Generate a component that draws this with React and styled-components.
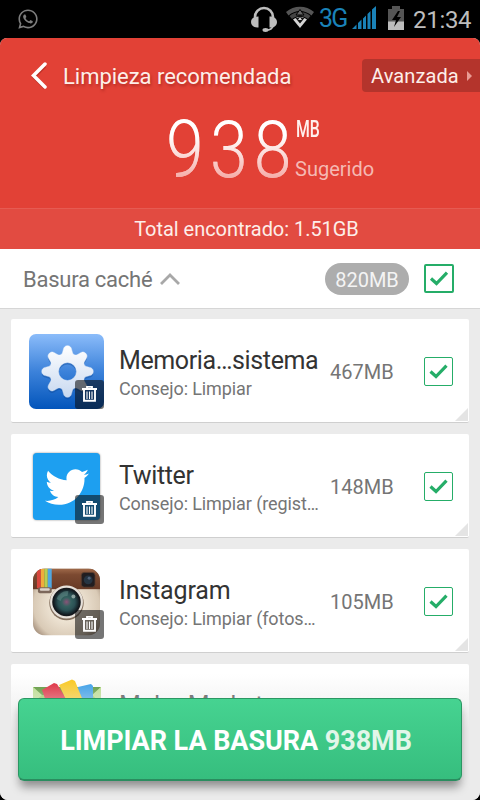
import React from 'react';
import styled, { createGlobalStyle } from 'styled-components';
import { FaTwitter, FaWhatsapp } from 'react-icons/fa';

const palette = {
  red: '#e24136',
  redLight: '#e24b41',
  green: '#25ad68',
  bg: '#ebebeb',
  blue: '#1a82b8',
};

const GlobalStyle = createGlobalStyle`
  * {
    box-sizing: border-box;
  }
  body {
    margin: 0;
    background: #000;
    font-family: Roboto, 'Liberation Sans', sans-serif;
  }
  svg {
    display: block;
    flex-shrink: 0;
  }
`;

const Screen = styled.div`
  width: 480px;
  height: 800px;
  overflow: hidden;
  background: #000;
`;

const StatusBar = styled.div`
  display: flex;
  align-items: flex-start;
  height: 38px;
  padding: 6px 0 0 17px;
  color: #7d7d7d;
`;

const Notification = styled.div`
  margin-top: 2px;
`;

const StatusIcons = styled.div`
  display: flex;
  align-items: flex-start;
  margin-left: auto;
`;

const Network = styled.span`
  margin-left: 4px;
  width: 33px;
  font-size: 25px;
  line-height: 25px;
  letter-spacing: -1.8px;
  color: ${palette.blue};
`;

const Clock = styled.span`
  width: 67px;
  margin-left: 9px;
  font-size: 24px;
  line-height: 28px;
  letter-spacing: -0.3px;
  color: #bdbdbd;
`;

const Page = styled.div`
  position: relative;
  height: 762px;
  overflow: hidden;
  border-radius: 7px 7px 8px 8px;
  background: ${palette.bg};
`;

const Header = styled.header`
  height: 211px;
  background: ${palette.red};
  color: #fdeee9;
`;

const TitleBar = styled.div`
  display: flex;
  align-items: center;
  height: 75px;
  padding-left: 30px;
`;

const PageTitle = styled.h1`
  margin: 3px 0 0 15px;
  font-weight: normal;
  font-size: 22px;
  line-height: 30px;
  letter-spacing: -0.03px;
  text-shadow: 1px 2px 3px rgba(90, 0, 0, 0.35);
`;

const Advanced = styled.button`
  display: flex;
  align-items: center;
  justify-content: space-between;
  width: 118px;
  height: 33px;
  margin-left: auto;
  padding: 0 8px 0 9px;
  border: 0;
  border-radius: 4px 0 0 4px;
  background: #b4342c;
  color: #fdeee9;
  font-family: inherit;
  font-size: 20px;
  letter-spacing: 0.1px;
`;

const Summary = styled.div`
  display: flex;
  height: 95px;
  padding: 0 0 0 166px;
`;

const Amount = styled.div`
  width: 129px;
  margin-top: -10px;
  height: 94px;
  font-size: 80px;
  font-weight: 300;
  line-height: 94px;
  letter-spacing: 7.3px;
  white-space: nowrap;
  transform: scaleX(0.85);
  transform-origin: left;
  color: transparent;
  filter: drop-shadow(0.8px 0.3px 0 rgba(252, 215, 210, 0.75));

  span {
    display: inline-block;
    width: 150px;
    height: 94px;
    overflow: hidden;
    background: linear-gradient(#fff 35%, #f5a9a4 82%);
    background-clip: text;
  }
`;

const AmountNotes = styled.div`
  display: flex;
  flex-direction: column;
`;

const Unit = styled.span`
  height: 38px;
  margin-left: 1px;
  font-size: 24px;
  font-weight: 500;
  line-height: 32px;
  transform: scaleX(0.66);
  transform-origin: left;
  color: #fff0ee;
`;

const Suggested = styled.span`
  margin-top: 4px;
  font-size: 20px;
  line-height: 28px;
  color: #f5b9b3;
`;

const Total = styled.div`
  height: 41px;
  border-top: 1px solid #e65b52;
  background: ${palette.redLight};
  font-size: 20px;
  line-height: 41px;
  letter-spacing: -0.04px;
  text-align: center;
  padding-left: 13px;
`;

const Section = styled.div`
  display: flex;
  align-items: center;
  height: 60px;
  padding: 0 26px 0 23px;
  border-bottom: 1px solid #d6d6d6;
  background: #fff;
`;

const SectionName = styled.span`
  margin: 2px 8px 0 0;
  font-size: 22px;
  letter-spacing: -0.25px;
  color: #757575;
`;

const Pill = styled.span`
  width: 84px;
  height: 32px;
  margin: 0 15px 0 auto;
  border-radius: 16px;
  background: #adadad;
  color: #f4f4f4;
  font-size: 20px;
  line-height: 34px;
  text-align: center;
`;

const CheckBox = styled.span`
  display: flex;
  align-items: center;
  justify-content: center;
  flex-shrink: 0;
  width: ${({ $bold }) => ($bold ? 30 : 29)}px;
  height: 29px;
  border: ${({ $bold }) => ($bold ? 2 : 1.6)}px solid ${palette.green};
  border-radius: 2px;
  background: #fff;
`;

const List = styled.div`
  display: flex;
  flex-direction: column;
  gap: 11px;
  padding: 10px 11px;
`;

const Card = styled.div`
  position: relative;
  display: flex;
  align-items: center;
  height: 104px;
  padding: 2px 16px 0 18px;
  border-radius: 2px;
  border-bottom: 1px solid #cfcfcf;
  background: #fff;

  &::after {
    content: '';
    position: absolute;
    right: 1px;
    bottom: 1px;
    width: 13px;
    height: 13px;
    background: #e4e4e4;
    clip-path: polygon(100% 0, 100% 100%, 0 100%);
  }
`;

const IconBox = styled.div`
  position: relative;
  display: flex;
  align-items: center;
  justify-content: center;
  width: 75px;
  height: 75px;
  margin-top: -1px;
`;

const TwitterTile = styled.div`
  display: flex;
  align-items: center;
  justify-content: center;
  width: 67px;
  height: 67px;
  margin-top: 1px;
  border-radius: 4px;
  background: #1d9ff0;
  color: #fff;
  box-shadow: 0 0 2px rgba(0, 0, 0, 0.5);
`;

const Badge = styled.div`
  position: absolute;
  right: 0;
  bottom: 0;
  display: flex;
  align-items: center;
  justify-content: center;
  width: 29px;
  height: 29px;
  border-radius: 3px;
  background: rgba(12, 12, 12, 0.57);
`;

const Info = styled.div`
  width: 211px;
  margin: 4px 0 0 15px;
  white-space: nowrap;
`;

const Name = styled.div`
  font-size: 25px;
  line-height: 31px;
  letter-spacing: ${({ $spacing = -0.38 }) => $spacing}px;
  color: #333;
`;

const Tip = styled.div`
  min-height: 26px;
  font-size: 18px;
  line-height: 26px;
  letter-spacing: -0.1px;
  color: #757575;
`;

const Size = styled.span`
  flex: 1;
  font-size: 20px;
  color: #757575;
`;

const Footer = styled.div`
  position: absolute;
  left: 0;
  right: 0;
  bottom: 0;
  height: 126px;
  padding: 24px 18px 0;
  background: linear-gradient(rgba(235, 235, 235, 0), ${palette.bg} 45%);
`;

const CleanButton = styled.button`
  display: block;
  width: 444px;
  height: 83px;
  padding: 3px 8px 0 0;
  border: 1px solid #2b9763;
  border-bottom: 2px solid #2a8d5f;
  border-radius: 6px;
  background: linear-gradient(#46d391, #36be7e);
  box-shadow: 0 8px 10px -2px rgba(0, 0, 0, 0.4);
  color: #fff;
  font-family: inherit;
  font-size: 27px;
  font-weight: 700;
  letter-spacing: -0.05px;

  span {
    color: #e2f6e9;
  }
`;

const HeadsetIcon = () => (
  <svg width="26" height="26" viewBox="0 0 26 26" fill="none">
    <path d="M4 14V11a9 9 0 0 1 18 0v3" stroke="#bdbdbd" strokeWidth="2.6" />
    <path d="M7.5 10.5v11C3 22 0 19.500 0 16s3-5.500 7.500-5.500zM18.500 10.500v11C23 22 26 19.500 26 16s-3-5.500-7.500-5.500z" fill="#bdbdbd" />
    <path d="M22 20c-1 3-3 4-6 4" stroke="#bdbdbd" strokeWidth="1.8" />
    <ellipse cx="14.500" cy="24" rx="3" ry="1.900" fill="#bdbdbd" />
  </svg>
);

const WifiIcon = () => (
  <svg width="30" height="23" viewBox="0 0 30 23" fill="none">
    <path d="M1 6C9-1 21-1 29 6l-2.500 3.500c-6.500-6-16.500-6-23 0z" fill="#555" />
    <path d="M4.500 10c6-5.500 15-5.500 21 0L23 13c-5-4-11-4-16 0z" fill="#444" />
    <path d="M8 13.500L15 22l7-8.500c-4-3.500-10-3.500-14 0z" fill="#d4d4d4" />
    <path d="M15 3.500l4 5.500h-8z" fill="#666" stroke="#000" strokeWidth="1" />
    <path d="M13.500 9h3v3h3L15 17.500 10.500 12h3z" fill="#111" />
    <path d="M15 11l2 3h-4z" fill="#d4d4d4" />
  </svg>
);

const SignalIcon = () => (
  <svg width="24" height="24" viewBox="0 0 24 24" fill={palette.blue}>
    <path d="M0 23l4.500-4.500V23zM6 17l3.500-3.500V23H6zM11 12.500l3-3V23h-3zM15.500 8l3-3v18h-3zM20 3.500L24 0v23h-4z" />
  </svg>
);

const BatteryIcon = () => (
  <svg width="16" height="24" viewBox="0 0 16 24">
    <path d="M4 0h8v3h4v13H0V3h4z" fill="#555" />
    <path d="M0 15.500h16V24H0z" fill="#bdbdbd" />
    <path d="M10 5L4 14h4l-2 7 7-10H9l3-6z" fill="#000" />
  </svg>
);

const Check = ({ size = 19 }) => (
  <svg width={size} height="15" viewBox="0 0 19 15" fill="none">
    <path d="M1.500 7.500L7 12.500 17.500 1.700" stroke={palette.green} strokeWidth="3.200" />
  </svg>
);

const TrashIcon = () => (
  <svg width="15" height="16" viewBox="0 0 15 16" fill="none" stroke="#fff">
    <path d="M5 2V.8h5V2M0 3h15" strokeWidth="1.800" />
    <path d="M2 4v10.800h11V4" strokeWidth="1.900" />
    <path d="M5 5.500v7.500M7.500 5.500v7.500M10 5.500v7.500" strokeWidth="1.100" />
  </svg>
);

// eight rounded teeth around the centre of a 75px tile
const gearPath = () => {
  const points = [];
  for (let i = 0; i < 240; i += 1) {
    const angle = (i / 240) * Math.PI * 2;
    const r = 21.9 + (3.8 * Math.tanh(1.3 * Math.cos(angle * 8))) / 0.86;
    points.push(`${(38.5 + r * Math.cos(angle)).toFixed(2)} ${(37.5 + r * Math.sin(angle)).toFixed(2)}`);
  }
  return `M${points.join('L')}Z M47.500 37.500a9 9 0 1 0-18 0a9 9 0 1 0 18 0Z`;
};

const SystemIcon = () => (
  <svg width="75" height="75" viewBox="0 0 75 75">
    <defs>
      <linearGradient id="sys" x2="0" y2="1">
        <stop stopColor="#8bbcfa" />
        <stop offset="0.5" stopColor="#3c82da" />
        <stop offset="1" stopColor="#0355bb" />
      </linearGradient>
      <linearGradient id="gear" x2="0" y2="1">
        <stop stopColor="#fff" />
        <stop offset="1" stopColor="#c7d8f0" />
      </linearGradient>
    </defs>
    <rect width="75" height="75" rx="7" fill="url(#sys)" />
    <path d={gearPath()} transform="translate(0 2)" fill="#063f8c" opacity="0.35" fillRule="evenodd" />
    <path d={gearPath()} fill="url(#gear)" stroke="url(#gear)" strokeLinejoin="round" strokeWidth="0.500" fillRule="evenodd" />
  </svg>
);

const TwitterIcon = () => (
  <TwitterTile>
    <FaTwitter size={44} />
  </TwitterTile>
);

const InstagramIcon = () => (
  <svg width="67" height="69" viewBox="0 -1 68 69">
    <defs>
      <clipPath id="camera">
        <rect width="68" height="68" rx="12" />
      </clipPath>
      <radialGradient id="body" cy="0.55" r="0.7">
        <stop offset="0.3" stopColor="#efe5d5" />
        <stop offset="0.7" stopColor="#d9cab6" />
        <stop offset="1" stopColor="#7d6350" />
      </radialGradient>
      <linearGradient id="leather" x2="0" y2="1">
        <stop stopColor="#a06a4a" />
        <stop offset="0.3" stopColor="#7c4a31" />
        <stop offset="1" stopColor="#683a26" />
      </linearGradient>
      <radialGradient id="lens">
        <stop stopColor="#8a5378" />
        <stop offset="0.35" stopColor="#35615f" />
        <stop offset="0.65" stopColor="#2b5054" />
        <stop offset="1" stopColor="#10171d" />
      </radialGradient>
    </defs>
    <g clipPath="url(#camera)">
      <rect width="68" height="68" fill="url(#body)" />
      <rect width="68" height="21" fill="url(#leather)" />
      <path d="M4 0h4v20H4z" fill="#d9473d" />
      <path d="M8 0h3.500v20H8z" fill="#efad3c" />
      <path d="M11.500 0H15v20h-3.500z" fill="#b9cf50" />
      <path d="M15 0h4v20h-4z" fill="#51a8e0" />
      <rect x="5" y="19" width="14" height="6" rx="2" fill="#7c675a" />
      <rect x="7" y="20" width="10" height="2.500" rx="1" fill="#ddd3ca" />
    </g>
    <rect x="49" y="4" width="14" height="15" rx="3" fill="#211d20" stroke="#60402f" strokeWidth="0.800" />
    <circle cx="56" cy="11.500" r="4.500" fill="#263543" />
    <circle cx="57" cy="10" r="1.500" fill="#53637a" />
    <circle cx="34" cy="35" r="17.500" fill="#84705e" />
    <circle cx="34" cy="34" r="16.700" fill="#e7e1da" />
    <circle cx="34" cy="34" r="14.500" fill="#17191d" />
    <circle cx="34" cy="34" r="13.300" fill="url(#lens)" />
    <path d="M24 31a11 11 0 0 1 12-8l-1 5a7 7 0 0 0-7 5z" fill="#68938e" opacity="0.5" />
    <circle cx="41" cy="28.500" r="2" fill="#a4b8b4" opacity="0.8" />
  </svg>
);

const MarketIcon = () => (
  <svg width="68" height="75" viewBox="0 0 68 75">
    <path d="M0 8h68v60H0z" fill="#8dc94f" />
    <path d="M0 8h68l-8 8H8z" fill="#4b8d25" />
    <path d="M0 8l9 8-9 8zM68 8l-9 8 9 8z" fill="#b5dd83" />
    <path d="M45 8l13-3 2 2v35H45z" fill="#2495e8" />
    <path d="M9 11l12-7 3 1 20 32H18z" fill="#de172c" />
    <path d="M26 6l13-5.500 3 1.500 15 37H42z" fill="#fbc610" />
  </svg>
);

const items = [
  { name: 'Memoria…sistema', tip: 'Consejo: Limpiar', size: '467MB', icon: SystemIcon },
  { name: 'Twitter', tip: 'Consejo: Limpiar (regist…', size: '148MB', icon: TwitterIcon },
  { name: 'Instagram', tip: 'Consejo: Limpiar (fotos…', size: '105MB', icon: InstagramIcon, spacing: -0.15 },
  { name: 'Mobo Market', tip: '', size: '', icon: MarketIcon },
];

const JunkItem = ({ name, tip, size, spacing, icon: Icon }) => {
  return (
    <Card>
      <IconBox>
        <Icon />
        <Badge>
          <TrashIcon />
        </Badge>
      </IconBox>
      <Info>
        <Name $spacing={spacing}>{name}</Name>
        <Tip>{tip}</Tip>
      </Info>
      <Size>{size}</Size>
      <CheckBox>
        <Check />
      </CheckBox>
    </Card>
  );
};

const App = () => {
  return (
    <Screen>
      <GlobalStyle />
      <StatusBar>
        <Notification>
          <FaWhatsapp size={22} />
        </Notification>
        <StatusIcons>
          <HeadsetIcon />
          <svg width="8" height="1" />
          <WifiIcon />
          <Network>3G</Network>
          <SignalIcon />
          <svg width="12" height="1" />
          <BatteryIcon />
          <Clock>21:34</Clock>
        </StatusIcons>
      </StatusBar>
      <Page>
        <Header>
          <TitleBar>
            <svg width="18" height="28" viewBox="0 0 18 28" fill="none">
              <path d="M15 4L4 15l11 11" stroke="#8c1a12" strokeOpacity="0.4" strokeWidth="3.500" />
              <path d="M15 2L3.500 13.500 15 25" stroke="#fff" strokeWidth="3.500" strokeLinecap="round" />
            </svg>
            <PageTitle>Limpieza recomendada</PageTitle>
            <Advanced>
              Avanzada
              <svg width="5" height="10" viewBox="0 0 5 10" fill="#e99b94">
                <path d="M0 0l5 5-5 5z" />
              </svg>
            </Advanced>
          </TitleBar>
          <Summary>
            <Amount>
              <span>938</span>
            </Amount>
            <AmountNotes>
              <Unit>MB</Unit>
              <Suggested>Sugerido</Suggested>
            </AmountNotes>
          </Summary>
          <Total>Total encontrado: 1.51GB</Total>
        </Header>
        <Section>
          <SectionName>Basura caché</SectionName>
          <svg width="20" height="12" viewBox="0 0 20 12" fill="none">
            <path d="M1 11l9-9 9 9" stroke="#a8a8a8" strokeWidth="2.800" />
          </svg>
          <Pill>820MB</Pill>
          <CheckBox $bold>
            <Check size={20} />
          </CheckBox>
        </Section>
        <List>
          {items.map((item) => (
            <JunkItem key={item.name} {...item} />
          ))}
        </List>
        <Footer>
          <CleanButton>
            LIMPIAR LA BASURA <span>938MB</span>
          </CleanButton>
        </Footer>
      </Page>
    </Screen>
  );
};

export default App;
